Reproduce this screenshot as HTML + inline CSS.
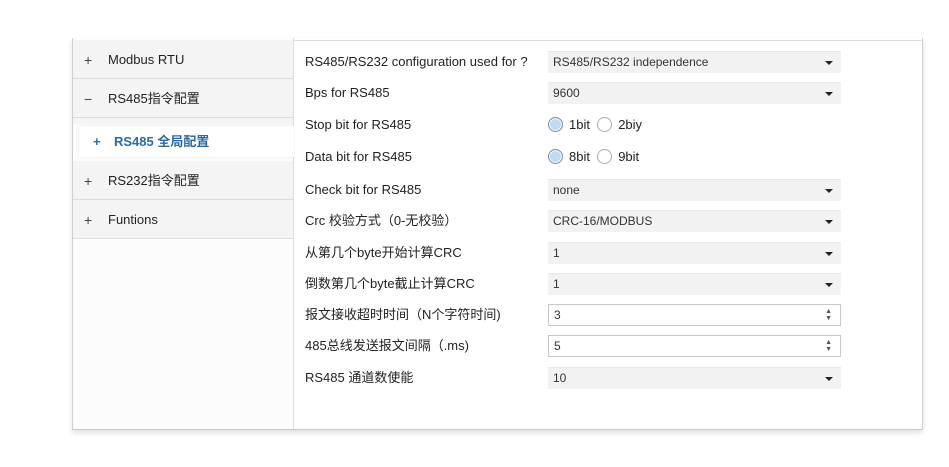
<!DOCTYPE html><html><head><meta charset="utf-8"><style>
body{margin:0;width:949px;height:467px;background:#fff;font-family:"Liberation Sans","Noto Sans CJK SC",sans-serif;font-size:13px;color:#222;position:relative;overflow:hidden}
.panel{position:absolute;left:72px;top:38px;width:849px;height:391px;border-left:1px solid #cfcfcf;border-right:1px solid #cfcfcf;border-bottom:1px solid #c8c8c8;box-shadow:0 3px 5px rgba(0,0,0,.12)}
.side{position:absolute;left:0;top:0;width:220px;height:391px;background:#fcfcfc;border-right:1px solid #ddd}
.row{position:absolute;left:0;width:220px;height:38px;background:#f4f4f4;border-bottom:1px solid #dcdcdc;line-height:40px}
.row .s{position:absolute;left:11px;color:#444;font-size:14px}
.row .t{position:absolute;left:35px}
.sel{position:absolute;left:6px;top:88px;width:215px;height:31px;background:#fff;line-height:31px;color:#2a6aa0;font-weight:bold;box-shadow:0 0 2px rgba(0,0,0,.12)}
.main{position:absolute;left:221px;top:2px;right:0;bottom:0;border-top:1px solid #ddd}
.l{position:absolute;left:11px;line-height:16px}
.c{position:absolute;left:254px;width:293px;height:21px;background:#f2f2f2;border-top:1px solid #e8e8e8;line-height:21px;font-size:12px;color:#333}
.c span{position:absolute;left:5px}
.c i{position:absolute;right:8px;top:9px;border:4px solid transparent;border-top:4px solid #222;border-bottom:0}
.n{background:#fff;border:1px solid #c8c8c8;height:20px;width:291px}
.n b{position:absolute;right:8px;top:3px;font-size:7px;line-height:7px;color:#555;font-weight:normal}
.rad{position:absolute;left:254px;font-size:13px;line-height:16px}
.rb{display:inline-block;width:13px;height:13px;border-radius:50%;border:1px solid #aaa;vertical-align:-3px;margin-right:6px;background:#fff}
.rb.on{background:#c6d8ef;border-color:#6a8cb5;box-shadow:inset 0 0 0 1px #fff}
</style></head><body>
<div class="panel">
<div class="side">
<div class="row" style="top:2px"><span class="s">+</span><span class="t">Modbus RTU</span></div>
<div class="row" style="top:41px"><span class="s">−</span><span class="t">RS485指令配置</span></div>
<div class="row" style="top:80px;height:6px;border:0"></div>
<div class="sel"><span style="position:absolute;left:14px">+</span><span style="position:absolute;left:35px">RS485 全局配置</span></div>
<div class="row" style="top:123px"><span class="s">+</span><span class="t">RS232指令配置</span></div>
<div class="row" style="top:162px"><span class="s">+</span><span class="t">Funtions</span></div>
</div>
<div class="main">
<div class="l" style="top:13px">RS485/RS232 configuration used for ?</div>
<div class="c" style="top:10px"><span>RS485/RS232 independence</span><i></i></div>
<div class="l" style="top:44px">Bps for RS485</div>
<div class="c" style="top:41px"><span>9600</span><i></i></div>
<div class="l" style="top:76px">Stop bit for RS485</div>
<div class="rad" style="top:76px"><span class="rb on"></span>1bit &nbsp;<span class="rb"></span>2biy</div>
<div class="l" style="top:108px">Data bit for RS485</div>
<div class="rad" style="top:108px"><span class="rb on"></span>8bit &nbsp;<span class="rb"></span>9bit</div>
<div class="l" style="top:141px">Check bit for RS485</div>
<div class="c" style="top:138px"><span>none</span><i></i></div>
<div class="l" style="top:172px">Crc 校验方式（0-无校验）</div>
<div class="c" style="top:169px"><span>CRC-16/MODBUS</span><i></i></div>
<div class="l" style="top:204px">从第几个byte开始计算CRC</div>
<div class="c" style="top:201px"><span>1</span><i></i></div>
<div class="l" style="top:235px">倒数第几个byte截止计算CRC</div>
<div class="c" style="top:232px"><span>1</span><i></i></div>
<div class="l" style="top:266px">报文接收超时时间（N个字符时间)</div>
<div class="c n" style="top:263px"><span>3</span><b>▲<br>▼</b></div>
<div class="l" style="top:297px">485总线发送报文间隔（.ms)</div>
<div class="c n" style="top:294px"><span>5</span><b>▲<br>▼</b></div>
<div class="l" style="top:329px">RS485 通道数使能</div>
<div class="c" style="top:326px"><span>10</span><i></i></div>
</div>
</div>
</body></html>
